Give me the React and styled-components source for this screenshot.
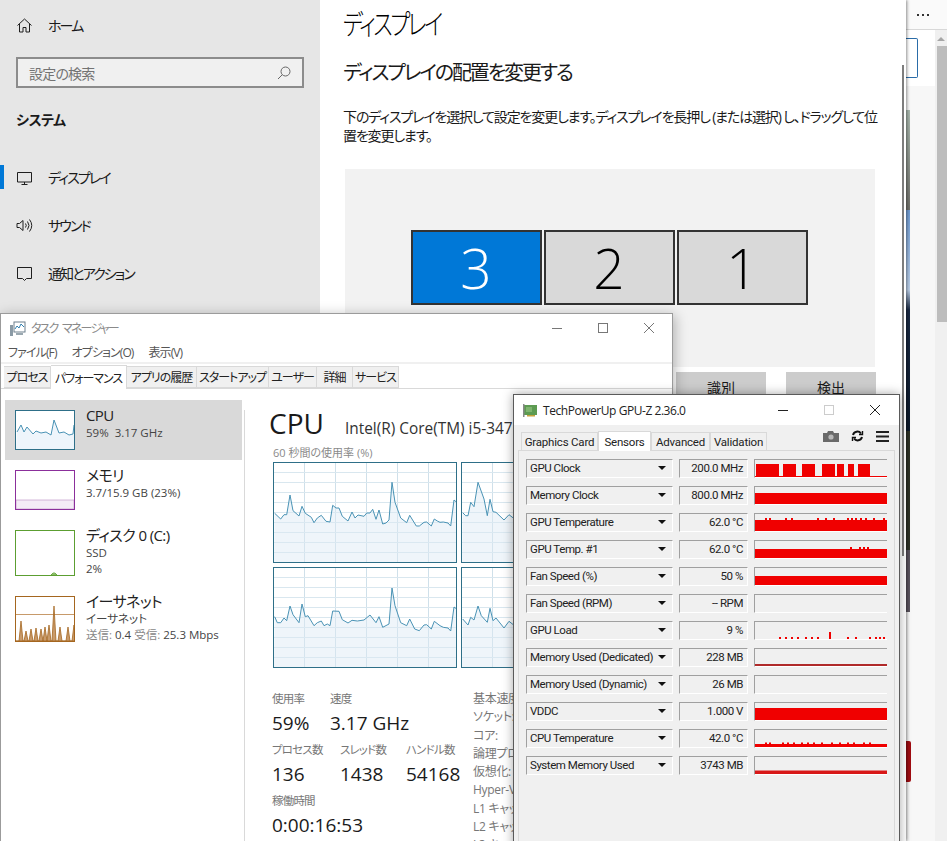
import React from "react";
import styled, { createGlobalStyle } from "styled-components";

const GlobalStyle = createGlobalStyle`
  html, body {
    margin: 0;
    padding: 0;
    background: #fff;
    font-family: "Open Sans", "Noto Sans CJK JP", sans-serif;
    font-feature-settings: "palt";
  }
`;

const Desktop = styled.div`
  position: relative;
  width: 947px;
  height: 841px;
  overflow: hidden;
  background: #f5f5f5;
`;

/* ---------- browser behind everything ---------- */

const Browser = styled.div`
  position: absolute;
  left: 906px;
  top: 0;
  width: 41px;
  height: 841px;
  display: flex;
  flex-direction: column;
  background: #f7f7f7;
`;

const BrowserTop = styled.div`
  height: 29px;
  flex: none;
  display: flex;
  justify-content: center;
  align-items: center;
  padding-right: 8px;
  gap: 3px;
  background: #fafafa;
  border-bottom: 1px solid #d8d8d8;
`;

const Dot = styled.span`
  width: 2px;
  height: 2px;
  background: #333;
`;

const BrowserBody = styled.div`
  flex: 1;
  display: flex;
  min-height: 0;
`;

const BrowserMain = styled.div`
  flex: 1;
  display: flex;
  flex-direction: column;
`;

const BrowserHead = styled.div`
  height: 56px;
  flex: none;
  padding-top: 8px;
  box-sizing: border-box;
  background: #fff;
`;

const BlueBox = styled.div`
  width: 11px;
  height: 38px;
  border: 1px solid #2a6ca8;
  border-left: none;
  border-radius: 0 2px 2px 0;
`;

const Strip = styled.div`
  width: 4px;
  margin-top: 24px;
  display: flex;
  flex-direction: column;
`;

const StripPart = styled.div`
  height: ${(p) => p.$h}px;
  background: ${(p) => p.$bg};
`;

const BrowserScroll = styled.div`
  width: 12px;
  flex: none;
  display: flex;
  flex-direction: column;
  align-items: flex-end;
  background: #f0f0f0;
`;

const ScrollArrow = styled.div`
  width: 0;
  height: 0;
  margin: 7px 2px 5px 0;
  border-left: 4px solid transparent;
  border-right: 4px solid transparent;
  border-bottom: 4px solid #a6a6a6;
`;

const ScrollThumb = styled.div`
  width: 10px;
  height: 276px;
  background: #bdbdbd;
`;

const RedTab = styled.div`
  position: absolute;
  left: 0;
  top: 741px;
  width: 5px;
  height: 41px;
  background: #a00c12;
  border-radius: 0 2px 2px 0;
`;

/* ---------- settings window ---------- */

const SettingsWindow = styled.div`
  position: absolute;
  left: 0;
  top: 0;
  width: 906px;
  height: 841px;
  display: flex;
  background: #fff;
  box-shadow: 1px 0 3px rgba(0, 0, 0, 0.45);
`;

const Nav = styled.nav`
  width: 320px;
  flex: none;
  padding-top: 1px;
  box-sizing: border-box;
  background: #e6e6e6;
`;

const NavItem = styled.div`
  position: relative;
  height: 48px;
  display: flex;
  align-items: center;
  padding-left: 16px;
  gap: 15px;
  font-size: 14px;
  letter-spacing: -1.9px;
  color: #1a1a1a;
`;

const NavIcon = styled.svg`
  width: 17px;
  height: 17px;
  flex: none;
  fill: none;
  stroke: #1f1f1f;
  stroke-width: 1;
`;

const ActiveMark = styled.span`
  position: absolute;
  left: 0;
  top: 12px;
  width: 4px;
  height: 24px;
  background: #0078d7;
`;

const SearchBox = styled.div`
  width: 288px;
  height: 31px;
  margin: 8px 0 0 16px;
  padding: 0 11px;
  box-sizing: border-box;
  display: flex;
  align-items: center;
  justify-content: space-between;
  background: #f0f0f0;
  border: 2px solid #8c8c8c;
  color: #737373;
  font-size: 14px;
  letter-spacing: -0.8px;
`;

const SectionLabel = styled.div`
  height: 62px;
  margin-bottom: 3px;
  padding-left: 16px;
  display: flex;
  align-items: center;
  font-size: 14px;
  font-weight: 700;
  letter-spacing: -0.5px;
  color: #1a1a1a;
`;

const Content = styled.main`
  flex: 1;
  position: relative;
  padding-left: 23px;
  box-sizing: border-box;
`;

const PageTitle = styled.h1`
  margin: 0;
  height: 48px;
  line-height: 48px;
  font-size: 28px;
  font-weight: 300;
  letter-spacing: -3.2px;
  color: #000;
  transform: scaleX(0.77);
  transform-origin: left center;
`;

const SubTitle = styled.h2`
  margin: 10px 0 0;
  height: 30px;
  line-height: 30px;
  font-size: 20px;
  font-weight: 400;
  letter-spacing: -2.1px;
  color: #1a1a1a;
`;

const Body = styled.p`
  margin: 19px 0 0;
  width: 540px;
  font-size: 14px;
  line-height: 19px;
  letter-spacing: -1.15px;
  color: #1a1a1a;
`;

const Arrangement = styled.div`
  width: 530px;
  height: 198px;
  margin: 24px 0 0 2px;
  padding: 61px 2px 0 0;
  box-sizing: border-box;
  display: flex;
  justify-content: center;
  gap: 2px;
  background: #f2f2f2;
`;

const Monitor = styled.div`
  width: 131px;
  height: 75px;
  box-sizing: border-box;
  display: flex;
  align-items: center;
  justify-content: center;
  border: 2px solid #333;
  font-size: 55px;
  font-weight: 300;
  background: ${(p) => (p.$active ? "#0078d7" : "#d9d9d9")};
  color: ${(p) => (p.$active ? "#fff" : "#000")};
`;

const ButtonRow = styled.div`
  margin: 5px 0 0 333px;
  display: flex;
  gap: 20px;
`;

const GreyButton = styled.div`
  width: 90px;
  height: 30px;
  display: flex;
  justify-content: center;
  align-items: center;
  background: #cccccc;
  font-size: 14px;
  color: #1a1a1a;
`;

const SettingsScroll = styled.div`
  position: absolute;
  right: 2px;
  top: 65px;
  width: 2px;
  height: 491px;
  background: #7d7d7d;
`;

/* ---------- task manager ---------- */

const TaskWindow = styled.div`
  position: absolute;
  left: 0;
  top: 313px;
  width: 673px;
  height: 528px;
  box-sizing: border-box;
  display: flex;
  flex-direction: column;
  background: #fff;
  border: 1px solid #9b9b9b;
  border-bottom: none;
  box-shadow: 2px 2px 12px rgba(0, 0, 0, 0.28);
  color: #333;
`;

const TaskTitle = styled.div`
  height: 28px;
  flex: none;
  padding-left: 8px;
  display: flex;
  align-items: center;
  gap: 5px;
  font-size: 12px;
  letter-spacing: -1.8px;
  word-spacing: 3px;
  color: #8a8a8a;
`;

const WinControls = styled.div`
  margin-left: auto;
  display: flex;
`;

const WinButton = styled.svg`
  width: 46px;
  height: 12px;
  fill: none;
  stroke: ${(p) => p.$color};
  stroke-width: 1;
`;

const MenuBar = styled.div`
  height: 20px;
  flex: none;
  padding-left: 7px;
  display: flex;
  align-items: center;
  gap: 15px;
  font-size: 12px;
  letter-spacing: -0.9px;
  color: #555;
  border-bottom: 2px solid #f0f0f0;
`;

const TabRow = styled.div`
  height: 25px;
  flex: none;
  box-sizing: border-box;
  padding: 0 0 0 3px;
  display: flex;
  align-items: flex-end;
  border-bottom: 1px solid #d9d9d9;
`;

const TaskTab = styled.div`
  width: ${(p) => p.$w}px;
  height: ${(p) => (p.$active ? 24 : 22)}px;
  margin-bottom: ${(p) => (p.$active ? -1 : 0)}px;
  box-sizing: border-box;
  display: flex;
  justify-content: center;
  align-items: center;
  border: 1px solid #d9d9d9;
  border-left: none;
  border-bottom: ${(p) => (p.$active ? "none" : "1px solid #d9d9d9")};
  background: ${(p) => (p.$active ? "#fff" : "#f0f0f0")};
  font-size: 12px;
  letter-spacing: -1px;
  color: #222;
  white-space: nowrap;
`;

const TaskBody = styled.div`
  flex: 1;
  min-height: 0;
  display: flex;
  overflow: hidden;
`;

const SideList = styled.div`
  width: 244px;
  flex: none;
  box-sizing: border-box;
  padding: 11px 3px 0 4px;
  display: flex;
  flex-direction: column;
  position: relative;
`;

const SideDivider = styled.div`
  position: absolute;
  right: 0;
  top: 21px;
  bottom: 0;
  width: 1px;
  background: #d9d9d9;
`;

const SideItem = styled.div`
  height: ${(p) => p.$h}px;
  flex: none;
  padding: 10px 0 0 10px;
  box-sizing: border-box;
  display: flex;
  gap: 11px;
  background: ${(p) => (p.$active ? "#d9d9d9" : "transparent")};
`;

const Thumb = styled.svg`
  width: 60px;
  height: ${(p) => p.$h}px;
  flex: none;
  box-sizing: border-box;
  border: 1px solid ${(p) => p.$color};
  background: #fff;
`;

const SideText = styled.div`
  margin-top: -4px;
  display: flex;
  flex-direction: column;
  min-width: 0;
`;

const SideName = styled.div`
  height: 19px;
  line-height: 19px;
  font-size: 15px;
  letter-spacing: -0.6px;
  color: #222;
`;

const SideSub = styled.div`
  height: 16px;
  line-height: 16px;
  font-size: 11.5px;
  white-space: nowrap;
  color: #444;
`;

const SideMuted = styled.span`
  color: #888;
`;

const PerfPane = styled.div`
  flex: 1;
  min-width: 0;
  padding: 15px 0 0 24px;
  overflow: hidden;
`;

const PerfHead = styled.div`
  height: 38px;
  display: flex;
  align-items: baseline;
  white-space: nowrap;
`;

const PerfTitle = styled.div`
  width: 76px;
  flex: none;
  font-size: 28px;
  line-height: 38px;
  color: #1a1a1a;
`;

const PerfCpuName = styled.div`
  font-size: 15.4px;
  color: #333;
`;

const GraphCaption = styled.div`
  height: 18px;
  margin: 2px 0 0 4px;
  line-height: 18px;
  font-size: 11px;
  color: #8a8a8a;
`;

const GraphGrid = styled.div`
  width: 372px;
  margin: 0 0 0 4px;
  display: grid;
  grid-template-columns: 184px 184px;
  grid-auto-rows: 101px;
  gap: 4px;
`;

const GraphCell = styled.svg`
  display: block;
  width: 184px;
  height: 101px;
  box-sizing: border-box;
  border: 1px solid #2e6f88;
  background: #fff;
`;

const StatsWrap = styled.div`
  margin: 22px 0 0 3px;
  display: flex;
`;

const StatsLeft = styled.div`
  width: 201px;
  flex: none;
`;

const StatRow = styled.div`
  height: 51px;
  display: flex;
`;

const Stat = styled.div`
  width: ${(p) => p.$w}px;
  flex: none;
  white-space: nowrap;
`;

const StatLabel = styled.div`
  height: 18px;
  line-height: 18px;
  font-size: 11.5px;
  letter-spacing: -0.8px;
  color: #777;
`;

const StatValue = styled.div`
  height: 30px;
  line-height: 30px;
  font-size: 19px;
  color: #1a1a1a;
`;

const SpecList = styled.div`
  display: flex;
  flex-direction: column;
  white-space: nowrap;
`;

const SpecLine = styled.div`
  height: 18.3px;
  line-height: 18.3px;
  font-size: 12px;
  letter-spacing: -0.3px;
  color: #777;
`;

/* ---------- GPU-Z ---------- */

const GpuWindow = styled.div`
  position: absolute;
  left: 513px;
  top: 394px;
  width: 387px;
  height: 460px;
  box-sizing: border-box;
  border: 1px solid #5a5a5a;
  background: #f0f0f0;
  box-shadow: 0 0 10px rgba(0, 0, 0, 0.35);
  font-family: Roboto, "Noto Sans CJK JP", sans-serif;
  font-variant-ligatures: none;
`;

const GpuTitle = styled.div`
  height: 30px;
  padding-left: 9px;
  display: flex;
  align-items: center;
  gap: 5px;
  background: #fff;
  font-family: "Open Sans", sans-serif;
  font-size: 12px;
  letter-spacing: -0.45px;
  color: #222;
`;

const GpuControls = styled.div`
  margin-left: auto;
  margin-right: 1px;
  display: flex;
`;

const GpuButton = styled.svg`
  width: 46px;
  height: 14px;
  fill: none;
  stroke: ${(p) => p.$color};
  stroke-width: 1;
`;

const GpuBar = styled.div`
  height: 25px;
  padding: 0 10px 0 7px;
  display: flex;
  justify-content: space-between;
  align-items: flex-start;
`;

const GpuTabs = styled.div`
  display: flex;
  align-items: flex-end;
  height: 25px;
`;

const GpuTab = styled.div`
  width: ${(p) => p.$w}px;
  height: ${(p) => (p.$active ? 20 : 18)}px;
  margin-bottom: ${(p) => (p.$active ? -1 : 0)}px;
  box-sizing: border-box;
  display: flex;
  justify-content: center;
  align-items: center;
  border: 1px solid #d9d9d9;
  border-bottom: none;
  background: ${(p) => (p.$active ? "#fff" : "#f0f0f0")};
  font-size: 11.5px;
  letter-spacing: -0.2px;
  white-space: nowrap;
  color: #222;
  position: relative;
`;

const GpuTools = styled.div`
  margin-top: 5px;
  display: flex;
  align-items: center;
  gap: 12px;
`;

const GpuPanel = styled.div`
  margin: 0 4px;
  height: 400px;
  box-sizing: border-box;
  padding: 8px 0 0 7px;
  border: 1px solid #d9d9d9;
  display: flex;
  flex-direction: column;
  gap: 8px;
`;

const SensorRow = styled.div`
  display: grid;
  grid-template-columns: 147px 69px 133px;
  gap: 6px;
  height: 19px;
`;

const Sunken = styled.div`
  box-sizing: border-box;
  height: 19px;
  padding-bottom: 1px;
  border: 1px solid;
  border-color: #a0a0a0 #fff #fff #a0a0a0;
  display: flex;
  align-items: center;
  font-size: 11.5px;
  letter-spacing: -0.45px;
  color: #222;
  white-space: nowrap;
`;

const SensorSelect = styled(Sunken)`
  justify-content: space-between;
  padding-left: 3px;
  padding-right: 6px;
`;

const Caret = styled.span`
  width: 0;
  height: 0;
  border-left: 4px solid transparent;
  border-right: 4px solid transparent;
  border-top: 4px solid #111;
`;

const SensorValue = styled(Sunken)`
  justify-content: flex-end;
  padding-right: 4px;
`;

const SensorGraph = styled.svg`
  display: block;
  box-sizing: border-box;
  width: 133px;
  height: 19px;
  border-top: 1px solid #a0a0a0;
  border-left: 1px solid #a0a0a0;
  border-bottom: 1px solid #fff;
  overflow: hidden;
`;

/* ---------- data ---------- */

const toPoints = (pts, ox, oy) =>
  pts.map(([x, y]) => `${((x - ox) / 3).toFixed(1)},${((y - oy) / 3).toFixed(1)}`).join(" ");

const core0 = [[42,608],[60,625],[70,612],[78,612],[88,553],[97,600],[115,616],[124,587],[134,608],[152,620],[160,636],[170,622],[182,614],[196,632],[208,634],[216,584],[226,592],[235,592],[245,617],[262,631],[274,604],[283,622],[292,613],[310,617],[318,607],[328,607],[336,596],[346,626],[355,598],[366,640],[376,637],[385,628],[394,515],[403,575],[420,622],[438,636],[447,614],[467,646],[476,646],[490,635],[498,634],[512,646],[521,625],[530,631],[538,635],[548,634],[562,637],[570,646],[580,568],[588,575]];
const core1 = [[606,606],[615,615],[622,615],[630,575],[640,588],[652,515],[670,565],[680,615],[688,566],[697,603],[706,605],[730,628],[745,612],[758,622],[790,630]];
const core2 = [[42,918],[50,936],[60,936],[70,922],[78,930],[88,886],[97,912],[115,936],[124,880],[134,918],[142,915],[160,945],[170,936],[182,931],[190,945],[200,940],[208,945],[216,901],[235,902],[245,927],[262,937],[274,929],[290,931],[310,928],[328,913],[346,936],[355,918],[366,950],[385,940],[394,832],[403,885],[420,936],[438,945],[447,925],[462,955],[476,960],[490,943],[498,942],[512,955],[521,932],[538,945],[548,950],[562,952],[570,961],[580,889],[588,895]];
const core3 = [[606,925],[622,943],[630,920],[640,928],[652,886],[662,915],[680,935],[688,893],[697,930],[706,922],[730,952],[745,932],[758,942],[790,950]];

const coreGraphs = [
  { id: "c0", pts: core0, ox: 40, oy: 457 },
  { id: "c1", pts: core1, ox: 604, oy: 457 },
  { id: "c2", pts: core2, ox: 40, oy: 772 },
  { id: "c3", pts: core3, ox: 604, oy: 772 }
];

const cpuThumb = "1,21 5,14 8,21 11,16 17,23 20,20 25,22 30,21 35,24 38,9 43,22 48,21 53,24 57,23 58,14";
const ethSpikes = [5, 10, 15, 20, 25, 29, 33, 38, 44, 52, 58];
const ethHeights = [20, 10, 12, 13, 12, 14, 16, 35, 14, 14, 16];

const gpuBlocks = [[1, 24], [28, 41], [47, 60], [67, 80], [82, 89], [93, 99], [103, 115]];

const sensors = [
  { name: "GPU Clock", value: "200.0 MHz", blocks: gpuBlocks, top: 4, base: true },
  { name: "Memory Clock", value: "800.0 MHz", top: 6 },
  { name: "GPU Temperature", value: "62.0 °C", top: 6, ticks: [10, 14, 30, 36, 62, 70, 78, 92, 96, 100, 105, 110, 118, 128], tickTop: 4 },
  { name: "GPU Temp. #1", value: "62.0 °C", top: 8, ticks: [95, 104, 108, 112], tickTop: 6 },
  { name: "Fan Speed (%)", value: "50 %", top: 8 },
  { name: "Fan Speed (RPM)", value: "-- RPM" },
  { name: "GPU Load", value: "9 %", ticks: [24, 30, 36, 42, 50, 56, 62, 74, 92, 100, 114, 120, 124, 128], tickTop: 15, tickBase: 17, spike: 74 },
  { name: "Memory Used (Dedicated)", value: "228 MB", top: 15, color: "#b02a2a" },
  { name: "Memory Used (Dynamic)", value: "26 MB" },
  { name: "VDDC", value: "1.000 V", top: 5 },
  { name: "CPU Temperature", value: "42.0 °C", top: 14, ticks: [10, 14, 27, 32, 38, 46, 52, 58, 66, 76, 84, 92, 98, 108, 114], tickTop: 12.5 },
  { name: "System Memory Used", value: "3743 MB", top: 13.5, color: "#d81818" }
];

const specs = ["基本速度:", "ソケット:", "コア:", "論理プロセッサ数:", "仮想化:", "Hyper-V のサポート:", "L1 キャッシュ:", "L2 キャッシュ:", "L3 キャッシュ:"];

/* ---------- small drawings ---------- */

const CoreGraph = ({ id, pts, ox, oy }) => {
  const line = toPoints(pts, ox, oy);
  return (
    <GraphCell viewBox="0 0 182 99" preserveAspectRatio="none">
      <defs>
        <pattern id={id} width="31" height="10" patternUnits="userSpaceOnUse">
          <path d="M30.5 0V10" stroke="#cfe0ea" fill="none" />
          <path d="M0 9.5H31" stroke="#d9e7ef" fill="none" />
        </pattern>
      </defs>
      <rect width="182" height="99" fill={`url(#${id})`} />
      <polygon points={`0,99 ${line} 182,99`} fill="#dbe9f3" fillOpacity="0.45" />
      <polyline points={line} fill="none" stroke="#4a93b5" strokeWidth="1" />
    </GraphCell>
  );
};

const SensorChart = ({ top, blocks, base, ticks, tickTop, tickBase, spike, color = "#f00000" }) => (
  <SensorGraph viewBox="0 0 132 17" preserveAspectRatio="none">
    {blocks && blocks.map(([a, b]) => <rect key={a} x={a} y={top} width={b - a} height={17 - top} fill={color} />)}
    {base && <rect x="0" y="16" width="132" height="1" fill={color} />}
    {!blocks && top !== undefined && <rect x="0" y={top} width="132" height={17 - top} fill={color} />}
    {ticks && ticks.map((x) => (
      <rect key={x} x={x} y={x === spike ? 10 : tickTop} width="2" height={(tickBase || 17) - (x === spike ? 10 : tickTop)} fill={color} />
    ))}
  </SensorGraph>
);

const TaskIcon = () => (
  <svg width="17" height="17" viewBox="0 0 17 17">
    <rect x="5" y="2" width="11" height="10" fill="#fff" stroke="#6d7f8c" />
    <path d="M6 9l2-3 2 2 2-4 3 3" fill="none" stroke="#2f7fb0" />
    <rect x="1" y="5" width="3" height="11" fill="#8a9aa5" />
    <rect x="7" y="13" width="7" height="2" fill="#9aa8b0" />
  </svg>
);

const GpuIcon = () => (
  <svg width="15" height="13" viewBox="0 0 15 13">
    <rect x="1" y="1" width="13" height="10" fill="#5d9b52" />
    <rect x="3" y="3" width="6" height="5" fill="#7fb56f" />
    <rect x="0" y="0" width="1.5" height="13" fill="#888" />
    <rect x="4" y="11" width="8" height="1.5" fill="#c6a23a" />
  </svg>
);

const CameraIcon = () => (
  <svg width="16" height="11" viewBox="0 0 16 11">
    <path d="M0 2h4l1-2h5l1 2h5v9H0z" fill="#6a6a6a" />
    <circle cx="8" cy="6" r="2.6" fill="#b8b8b8" />
  </svg>
);

const RefreshIcon = () => (
  <svg width="13" height="12" viewBox="0 0 13 12" fill="none" stroke="#111" strokeWidth="2">
    <path d="M2 5a4.5 4.5 0 0 1 8-1.5" />
    <path d="M11 7a4.5 4.5 0 0 1-8 1.5" />
    <path d="M11.5 1v3.5H8" strokeWidth="1.4" />
    <path d="M1.5 11V7.5H5" strokeWidth="1.4" />
  </svg>
);

const MenuIcon = () => (
  <svg width="13" height="11" viewBox="0 0 13 11" fill="#222">
    <rect width="13" height="2" />
    <rect y="4.5" width="13" height="2" />
    <rect y="9" width="13" height="2" />
  </svg>
);

const App = () => (
  <Desktop>
    <GlobalStyle />

    <Browser>
      <BrowserTop>
        <Dot />
        <Dot />
        <Dot />
      </BrowserTop>
      <BrowserBody>
        <BrowserMain>
          <BrowserHead>
            <BlueBox />
          </BrowserHead>
          <Strip>
            <StripPart $h={100} $bg="linear-gradient(#a9b8ae, #6f6f6a)" />
            <StripPart $h={80} $bg="linear-gradient(#6f9bd2, #b9cde6)" />
            <StripPart $h={20} $bg="linear-gradient(#b9cde6, #1a2a44)" />
            <StripPart $h={121} $bg="linear-gradient(#1a2a44, #0d1a2b)" />
            <StripPart $h={119} $bg="#2f3327" />
            <StripPart $h={62} $bg="#5c5560" />
          </Strip>
        </BrowserMain>
        <BrowserScroll>
          <ScrollArrow />
          <ScrollThumb />
        </BrowserScroll>
      </BrowserBody>
      <RedTab />
    </Browser>

    <SettingsWindow>
      <Nav>
        <NavItem>
          <NavIcon viewBox="0 0 17 17">
            <path d="M1.5 8.5L8.5 2l7 6.5M3.5 7v8H7v-4.5h3V15h3.5V7" />
          </NavIcon>
          ホーム
        </NavItem>
        <SearchBox>
          設定の検索
          <svg width="14" height="14" viewBox="0 0 14 14" fill="none" stroke="#666">
            <circle cx="8.5" cy="5.5" r="4.5" />
            <path d="M5.2 8.8L1 13" />
          </svg>
        </SearchBox>
        <SectionLabel>システム</SectionLabel>
        <NavItem>
          <ActiveMark />
          <NavIcon viewBox="0 0 17 17">
            <path d="M1.5 3.5h14V13h-14zM8.5 13v2M5.5 15.5h6" />
          </NavIcon>
          ディスプレイ
        </NavItem>
        <NavItem>
          <NavIcon viewBox="0 0 17 17">
            <path d="M1 6.5h2.500L7 3.500v10l-3.500-3H1zM9.500 6.500q1.500 2 0 4M11.500 4.500q3 4 0 8M13.500 2.500q4.500 6 0 12" />
          </NavIcon>
          サウンド
        </NavItem>
        <NavItem>
          <NavIcon viewBox="0 0 17 17">
            <path d="M1.5 2.5h14v11h-5l-2 2-2-2h-5z" />
          </NavIcon>
          通知とアクション
        </NavItem>
      </Nav>
      <Content>
        <PageTitle>ディスプレイ</PageTitle>
        <SubTitle>ディスプレイの配置を変更する</SubTitle>
        <Body>
          下のディスプレイを選択して設定を変更します。ディスプレイを長押し (または選択) し、ドラッグして位置を変更します。
        </Body>
        <Arrangement>
          <Monitor $active>3</Monitor>
          <Monitor>2</Monitor>
          <Monitor>1</Monitor>
        </Arrangement>
        <ButtonRow>
          <GreyButton>識別</GreyButton>
          <GreyButton>検出</GreyButton>
        </ButtonRow>
        <SettingsScroll />
      </Content>
    </SettingsWindow>

    <TaskWindow>
      <TaskTitle>
        <TaskIcon />
        タスク マネージャー
        <WinControls>
          <WinButton $color="#777" viewBox="0 0 46 12"><path d="M18 6.5h10" /></WinButton>
          <WinButton $color="#777" viewBox="0 0 46 12"><rect x="18.5" y="1.5" width="9" height="9" /></WinButton>
          <WinButton $color="#777" viewBox="0 0 46 12"><path d="M18 1l10 10M28 1L18 11" /></WinButton>
        </WinControls>
      </TaskTitle>
      <MenuBar>
        <span>ファイル(F)</span>
        <span>オプション(O)</span>
        <span>表示(V)</span>
      </MenuBar>
      <TabRow>
        <TaskTab $w={47}>プロセス</TaskTab>
        <TaskTab $w={76} $active>パフォーマンス</TaskTab>
        <TaskTab $w={70}>アプリの履歴</TaskTab>
        <TaskTab $w={72}>スタートアップ</TaskTab>
        <TaskTab $w={48}>ユーザー</TaskTab>
        <TaskTab $w={36}>詳細</TaskTab>
        <TaskTab $w={46}>サービス</TaskTab>
      </TabRow>
      <TaskBody>
        <SideList>
          <SideDivider />
          <SideItem $active $h={60}>
            <Thumb $h={40} $color="#2e6f88" viewBox="0 0 58 38">
              <polygon points={`0,38 ${cpuThumb} 58,38`} fill="#eef5fb" />
              <polyline points={cpuThumb} fill="none" stroke="#4a93b5" />
            </Thumb>
            <SideText>
              <SideName>CPU</SideName>
              <SideSub>59%&nbsp; 3.17 GHz</SideSub>
            </SideText>
          </SideItem>
          <SideItem $h={60}>
            <Thumb $h={40} $color="#8b2f9b" viewBox="0 0 58 38">
              <rect x="0" y="29" width="58" height="9" fill="#f4ecf6" stroke="#b88cc4" strokeWidth="0.6" />
            </Thumb>
            <SideText>
              <SideName>メモリ</SideName>
              <SideSub>3.7/15.9 GB (23%)</SideSub>
            </SideText>
          </SideItem>
          <SideItem $h={66}>
            <Thumb $h={46} $color="#5c9e31" viewBox="0 0 58 44">
              <path d="M35 44l2-2 2 0 2 2z" fill="#a9d08e" stroke="#5c9e31" strokeWidth="0.8" />
            </Thumb>
            <SideText>
              <SideName>ディスク 0 (C:)</SideName>
              <SideSub>SSD</SideSub>
              <SideSub>2%</SideSub>
            </SideText>
          </SideItem>
          <SideItem $h={66}>
            <Thumb $h={46} $color="#a5661f" viewBox="0 0 58 44">
              <path d="M0 17.5H58" stroke="#c79a6a" />
              <polygon
                points={`0,44 ${ethSpikes
                  .map((x, i) => `${x - 2},44 ${x},${44 - ethHeights[i]} ${x + 2},44`)
                  .join(" ")} 58,44`}
                fill="#c99b6b"
                stroke="#a5661f"
                strokeWidth="0.8"
              />
            </Thumb>
            <SideText>
              <SideName>イーサネット</SideName>
              <SideSub>イーサネット</SideSub>
              <SideSub><SideMuted>送信:</SideMuted> 0.4 <SideMuted>受信:</SideMuted> 25.3 Mbps</SideSub>
            </SideText>
          </SideItem>
        </SideList>
        <PerfPane>
          <PerfHead>
            <PerfTitle>CPU</PerfTitle>
            <PerfCpuName>Intel(R) Core(TM) i5-3470 CPU @ 3.20GHz</PerfCpuName>
          </PerfHead>
          <GraphCaption>60 秒間の使用率 (%)</GraphCaption>
          <GraphGrid>
            {coreGraphs.map((g) => (
              <CoreGraph key={g.id} {...g} />
            ))}
          </GraphGrid>
          <StatsWrap>
            <StatsLeft>
              <StatRow>
                <Stat $w={58}>
                  <StatLabel>使用率</StatLabel>
                  <StatValue>59%</StatValue>
                </Stat>
                <Stat $w={120}>
                  <StatLabel>速度</StatLabel>
                  <StatValue>3.17 GHz</StatValue>
                </Stat>
              </StatRow>
              <StatRow>
                <Stat $w={68}>
                  <StatLabel>プロセス数</StatLabel>
                  <StatValue>136</StatValue>
                </Stat>
                <Stat $w={66}>
                  <StatLabel>スレッド数</StatLabel>
                  <StatValue>1438</StatValue>
                </Stat>
                <Stat $w={60}>
                  <StatLabel>ハンドル数</StatLabel>
                  <StatValue>54168</StatValue>
                </Stat>
              </StatRow>
              <StatRow>
                <Stat $w={120}>
                  <StatLabel>稼働時間</StatLabel>
                  <StatValue>0:00:16:53</StatValue>
                </Stat>
              </StatRow>
            </StatsLeft>
            <SpecList>
              {specs.map((s) => (
                <SpecLine key={s}>{s}</SpecLine>
              ))}
            </SpecList>
          </StatsWrap>
        </PerfPane>
      </TaskBody>
    </TaskWindow>

    <GpuWindow>
      <GpuTitle>
        <GpuIcon />
        TechPowerUp GPU-Z 2.36.0
        <GpuControls>
          <GpuButton $color="#222" viewBox="0 0 46 14"><path d="M18 7.5h10" /></GpuButton>
          <GpuButton $color="#ccc" viewBox="0 0 46 14"><rect x="18.5" y="2.5" width="9" height="9" /></GpuButton>
          <GpuButton $color="#222" viewBox="0 0 46 14"><path d="M18 2l10 10M28 2L18 12" /></GpuButton>
        </GpuControls>
      </GpuTitle>
      <GpuBar>
        <GpuTabs>
          <GpuTab $w={77}>Graphics Card</GpuTab>
          <GpuTab $w={53} $active>Sensors</GpuTab>
          <GpuTab $w={59}>Advanced</GpuTab>
          <GpuTab $w={57}>Validation</GpuTab>
        </GpuTabs>
        <GpuTools>
          <CameraIcon />
          <RefreshIcon />
          <MenuIcon />
        </GpuTools>
      </GpuBar>
      <GpuPanel>
        {sensors.map(({ name, value, ...chart }) => (
          <SensorRow key={name}>
            <SensorSelect>
              {name}
              <Caret />
            </SensorSelect>
            <SensorValue>{value}</SensorValue>
            <SensorChart {...chart} />
          </SensorRow>
        ))}
      </GpuPanel>
    </GpuWindow>
  </Desktop>
);

export default App;
